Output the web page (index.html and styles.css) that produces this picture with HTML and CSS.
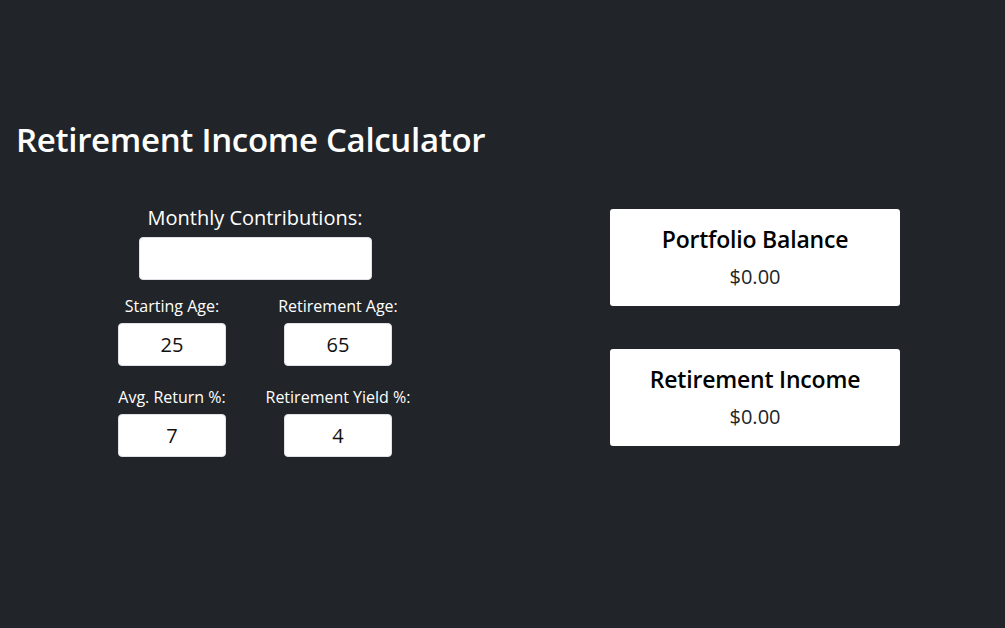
FILE: index.html
```html
<!DOCTYPE html>
<html>
<head>
<meta charset="utf-8">
<link rel="stylesheet" href="styles.css">
</head>
<body>
<div class="app">
  <h1 class="title">Retirement Income Calculator</h1>
  <div class="layout">
    <div class="form">
      <div class="field field-wide">
        <label class="label-lg">Monthly Contributions:</label>
        <input class="input input-wide" type="text" value="">
      </div>
      <div class="grid">
        <div class="field">
          <label class="label-sm">Starting Age:</label>
          <input class="input input-sm" type="text" value="25">
        </div>
        <div class="field">
          <label class="label-sm">Retirement Age:</label>
          <input class="input input-sm" type="text" value="65">
        </div>
        <div class="field">
          <label class="label-sm">Avg. Return %:</label>
          <input class="input input-sm" type="text" value="7">
        </div>
        <div class="field">
          <label class="label-sm">Retirement Yield %:</label>
          <input class="input input-sm" type="text" value="4">
        </div>
      </div>
    </div>
    <div class="results">
      <div class="card">
        <div class="card-title">Portfolio Balance</div>
        <div class="card-value">$0.00</div>
      </div>
      <div class="card">
        <div class="card-title">Retirement Income</div>
        <div class="card-value">$0.00</div>
      </div>
    </div>
  </div>
</div>
</body>
</html>
```

FILE: styles.css
```css
html, body {
  margin: 0;
  padding: 0;
  background: #212529;
  color: #ffffff;
  font-family: "Open Sans", "Noto Sans", sans-serif;
  height: 100%;
}
.app {
  padding: 118px 0 0 0;
}
.title {
  margin: 0 0 0 16px;
  font-size: 33px;
  font-weight: 600;
  line-height: 44px;
  letter-spacing: -0.3px;
}
.layout {
  display: grid;
  grid-template-columns: 500px 500px;
  padding-left: 5px;
  margin-top: 42px;
}
.form {
  display: flex;
  flex-direction: column;
  align-items: center;
}
.field {
  display: flex;
  flex-direction: column;
  align-items: center;
}
.label-lg {
  font-size: 20px;
  line-height: 28px;
  margin-bottom: 5px;
}
.label-sm {
  font-size: 16px;
  line-height: 22px;
  margin-bottom: 6px;
}
.input {
  box-sizing: border-box;
  height: 43px;
  border: 1px solid #dee2e6;
  border-radius: 4px;
  background: #fff;
  color: #111;
  font-family: inherit;
  font-size: 20px;
  text-align: center;
  outline: none;
  padding: 0;
}
.input-wide {
  width: 233px;
}
.input-sm {
  width: 108px;
}
.grid {
  display: grid;
  grid-template-columns: 166px 166px;
  row-gap: 20px;
  margin-top: 15px;
}
.results {
  display: flex;
  flex-direction: column;
  align-items: center;
  gap: 43px;
  padding-top: 5px;
}
.card {
  box-sizing: border-box;
  width: 290px;
  height: 97px;
  background: #fff;
  border-radius: 3px;
  color: #000;
  display: flex;
  flex-direction: column;
  align-items: center;
  padding-top: 14px;
}
.card-title {
  font-size: 23px;
  font-weight: 600;
  line-height: 32px;
  letter-spacing: -0.2px;
}
.card-value {
  font-size: 20px;
  line-height: 28px;
  margin-top: 8px;
  color: #212529;
}
```
